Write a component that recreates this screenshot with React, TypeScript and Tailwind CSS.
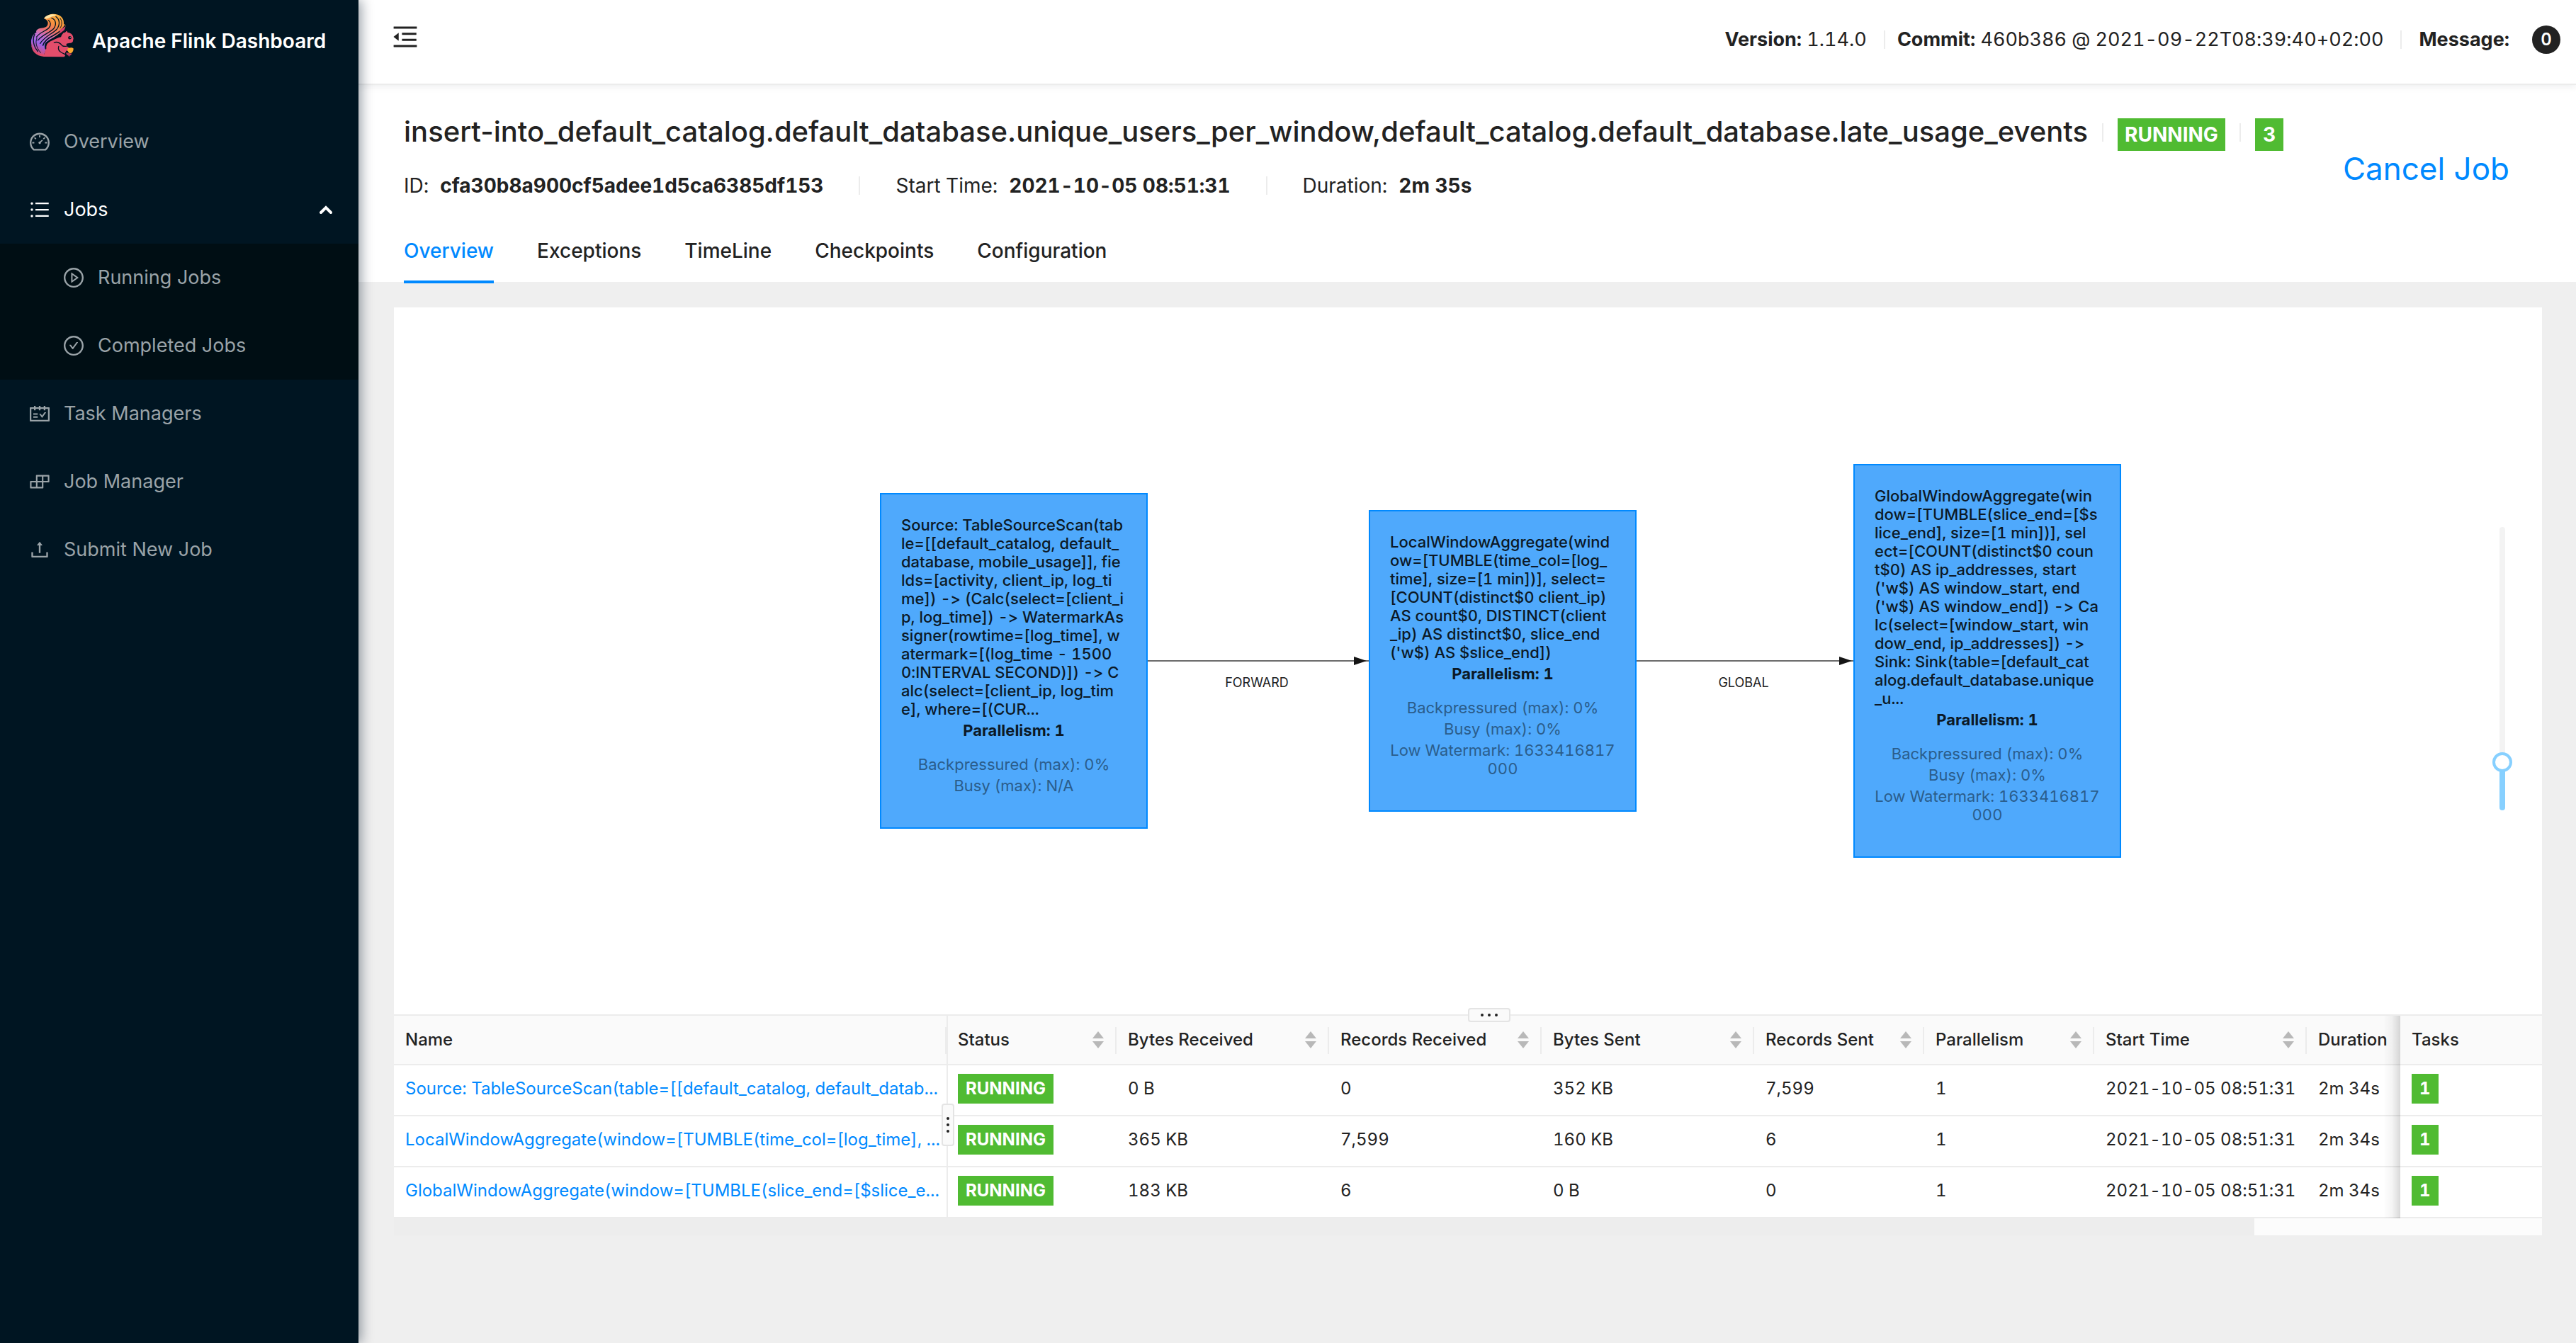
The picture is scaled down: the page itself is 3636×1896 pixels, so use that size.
import type { ReactNode } from "react";
import type { IconType } from "react-icons";
import {
  AiOutlineBars,
  AiOutlineBuild,
  AiOutlineCheckCircle,
  AiOutlineDashboard,
  AiOutlineMenuFold,
  AiOutlinePlayCircle,
  AiOutlineSchedule,
  AiOutlineUpload,
} from "react-icons/ai";

function Squirrel() {
  return (
    <svg viewBox="38 26 190 190" className="h-[62px] w-[62px] shrink-0" aria-hidden="true">
      <defs>
        <linearGradient id="tail" x1="150" y1="28" x2="70" y2="205" gradientUnits="userSpaceOnUse">
          <stop offset="0" stopColor="#fbb03f" />
          <stop offset="0.22" stopColor="#f7903f" />
          <stop offset="0.4" stopColor="#f0716b" />
          <stop offset="0.58" stopColor="#c46fd0" />
          <stop offset="0.75" stopColor="#9a63ea" />
          <stop offset="1" stopColor="#e0496a" />
        </linearGradient>
      </defs>
      <path
        d="M96 48C108 30 134 24 156 31C174 37 184 52 182 72L190 76C188 92 180 102 164 112C146 128 122 138 104 152C98 160 98 172 104 184L96 206C70 206 48 190 42 160C38 140 46 116 64 108C60 102 66 96 74 92C86 88 104 90 110 80C116 70 116 54 96 48Z"
        fill="url(#tail)"
      />
      <path d="M97 46C108 32 130 26 150 32C140 38 130 38 122 44C112 50 104 50 97 46Z" fill="#fde6a8" />
      <path
        d="M41 158C48 190 70 204 98 202L104 178C104 160 116 150 130 144C146 136 158 130 170 128L176 112L188 108L192 104C194 100 198 102 198 108C212 110 222 118 223 130C224 134 225 137 222 140C224 148 218 154 208 154L196 156C190 160 194 168 202 172L214 182C208 190 200 190 194 186L188 196C186 206 192 206 184 214L96 213C62 210 42 190 41 158Z"
        fill="#e34d6b"
      />
      <g fill="none" stroke="#001522" strokeLinecap="round">
        <path d="M116 56C126 62 128 76 118 88C106 102 80 106 64 128" strokeWidth="4" />
        <path d="M130 46C148 52 152 74 138 92C124 108 92 116 70 142" strokeWidth="4" />
        <path d="M148 40C166 52 166 76 152 94C134 114 100 124 80 156" strokeWidth="4" />
        <path d="M166 46C176 58 176 76 166 90" strokeWidth="3" />
        <path d="M188 78C178 96 158 110 136 122C116 132 98 144 92 164" strokeWidth="5" />
        <path d="M176 112C164 124 140 132 122 142C108 150 102 162 104 178" strokeWidth="5" />
        <path d="M56 116C46 138 50 168 70 190" strokeWidth="4" />
        <path d="M66 132C58 150 62 172 82 196" strokeWidth="3" />
        <path d="M140 152C156 146 168 156 176 166C184 170 190 168 194 168" strokeWidth="4" />
        <path d="M160 168C156 180 162 190 174 196C180 200 186 200 188 204" strokeWidth="4" />
      </g>
      <path d="M164 98L190 82L184 98L166 112Z" fill="#d8406f" />
      <circle cx="208" cy="131" r="7" fill="#0b1020" />
      <circle cx="210" cy="129" r="2" fill="#ffffff" />
      <path d="M198 180C200 174 218 170 224 178C224 192 216 200 208 198C202 196 198 188 198 180Z" fill="#fba92f" />
      <path d="M192 196C200 194 208 202 216 198L214 206L208 208L206 214L202 208C196 206 192 202 192 196Z" fill="#b93a5c" />
    </svg>
  );
}

function NavItem({ icon: Icon, label, sub }: { icon: IconType; label: string; sub?: boolean }) {
  return (
    <a
      href="#"
      className={`flex h-24 items-center gap-[18px] text-[#9aa3a8] ${sub ? "pl-[88px]" : "pl-[40px]"}`}
    >
      <Icon className="h-8 w-8" />
      {label}
    </a>
  );
}

function Sidebar() {
  return (
    <aside className="relative z-20 w-[506px] shrink-0 bg-[#001522] text-[27px] shadow-[4px_0_16px_rgba(0,21,41,0.4)]">
      <div className="flex h-[152px] items-start gap-[25px] pt-[19px] pl-[43px]">
        <Squirrel />
        <h1 className="text-[28px] leading-[78px] font-semibold whitespace-nowrap text-white">
          Apache Flink Dashboard
        </h1>
      </div>
      <nav>
        <NavItem icon={AiOutlineDashboard} label="Overview" />
        <button type="button" className="flex h-24 w-full items-center gap-[18px] pr-9 pl-[40px] text-white">
          <AiOutlineBars className="h-8 w-8" />
          Jobs
          <svg viewBox="0 0 20 14" className="ml-auto h-[14px] w-5" aria-hidden="true">
            <path d="M3 11L10 4L17 11" fill="none" stroke="currentColor" strokeWidth="4" strokeLinecap="round" />
          </svg>
        </button>
        <div className="bg-[#000e14]">
          <NavItem icon={AiOutlinePlayCircle} label="Running Jobs" sub />
          <NavItem icon={AiOutlineCheckCircle} label="Completed Jobs" sub />
        </div>
        <NavItem icon={AiOutlineSchedule} label="Task Managers" />
        <NavItem icon={AiOutlineBuild} label="Job Manager" />
        <NavItem icon={AiOutlineUpload} label="Submit New Job" />
      </nav>
    </aside>
  );
}

function Divider() {
  return <span className="h-[26px] w-[2px] shrink-0 bg-[#ececec]" />;
}

function TopBar() {
  return (
    <header className="relative z-10 flex h-[120px] items-center border-b-2 border-[#ececec] bg-white pr-[22px] pb-[6px] pl-[45px] text-[27px] shadow-[0_2px_10px_rgba(0,21,41,0.08)]">
      <button type="button" aria-label="Collapse menu" className="-mt-2">
        <AiOutlineMenuFold className="h-[42px] w-[42px]" />
      </button>
      <div className="ml-auto flex items-center whitespace-nowrap tabular-nums">
        <span>
          <strong className="font-bold">Version:</strong> 1.14.0
        </span>
        <span className="flex pr-[17px] pl-6">
          <Divider />
        </span>
        <span>
          <strong className="font-bold">Commit:</strong> 460b386 @ 2021-09-22T08:39:40+02:00
        </span>
        <span className="flex px-6">
          <Divider />
        </span>
        <strong className="font-bold">Message:</strong>
        <span className="ml-8 flex h-10 w-10 items-center justify-center rounded-full bg-[#222222] text-[24px] font-semibold text-white">
          0
        </span>
      </div>
    </header>
  );
}

const tabs = ["Overview", "Exceptions", "TimeLine", "Checkpoints", "Configuration"];

function JobHeader() {
  return (
    <section className="bg-white pt-[38px] pl-[64px]">
      <div className="flex items-end justify-between pr-[94px]">
        <div>
          <div className="flex items-baseline gap-5">
            <h2 className="text-[40px] leading-[56px] font-medium whitespace-nowrap">
              insert-into_default_catalog.default_database.unique_users_per_window,default_catalog.default_database.late_usage_events
            </h2>
            <Divider />
            <span className="bg-[#50bb32] px-[10px] text-[28px] leading-[46px] font-bold text-white">RUNNING</span>
            <Divider />
            <span className="bg-[#50bb32] px-[11px] text-[28px] leading-[46px] font-bold text-white">3</span>
          </div>
          <dl className="mt-[34px] flex items-center gap-[50px] text-[28px] leading-[28px] tabular-nums">
            <div className="flex gap-4">
              <dt>ID:</dt>
              <dd className="font-bold">cfa30b8a900cf5adee1d5ca6385df153</dd>
            </div>
            <Divider />
            <div className="flex gap-4">
              <dt>Start Time:</dt>
              <dd className="font-bold">2021-10-05 08:51:31</dd>
            </div>
            <Divider />
            <div className="flex gap-4">
              <dt>Duration:</dt>
              <dd className="font-bold">2m 35s</dd>
            </div>
          </dl>
        </div>
        <a href="#" className="text-[44px] leading-[76px] text-[#0089ff]">
          Cancel Job
        </a>
      </div>
      <div role="tablist" className="mt-[34px] flex h-[88px] gap-[61px] text-[28px] font-medium">
        {tabs.map((tab, i) => (
          <button
            key={tab}
            type="button"
            role="tab"
            aria-selected={i === 0}
            className={`relative ${i === 0 ? "text-[#0089ff]" : ""}`}
          >
            {tab}
            {i === 0 && <span className="absolute inset-x-0 -bottom-[2px] h-1 bg-[#0089ff]" />}
          </button>
        ))}
      </div>
    </section>
  );
}

type GraphNode = { place: string; lines: string[]; metrics: string[] };

const nodes: GraphNode[] = [
  {
    place: "left-[686px] top-[262px]",
    lines: [
      "Source: TableSourceScan(tab",
      "le=[[default_catalog, default_",
      "database, mobile_usage]], fie",
      "lds=[activity, client_ip, log_ti",
      "me]) -> (Calc(select=[client_i",
      "p, log_time]) -> WatermarkAs",
      "signer(rowtime=[log_time], w",
      "atermark=[(log_time - 1500",
      "0:INTERVAL SECOND)]) -> C",
      "alc(select=[client_ip, log_tim",
      "e], where=[(CUR...",
    ],
    metrics: ["Backpressured (max): 0%", "Busy (max): N/A"],
  },
  {
    place: "left-[1376px] top-[286px]",
    lines: [
      "LocalWindowAggregate(wind",
      "ow=[TUMBLE(time_col=[log_",
      "time], size=[1 min])], select=",
      "[COUNT(distinct$0 client_ip)",
      "AS count$0, DISTINCT(client",
      "_ip) AS distinct$0, slice_end",
      "('w$) AS $slice_end])",
    ],
    metrics: ["Backpressured (max): 0%", "Busy (max): 0%", "Low Watermark: 1633416817\n000"],
  },
  {
    place: "left-[2060px] top-[221px]",
    lines: [
      "GlobalWindowAggregate(win",
      "dow=[TUMBLE(slice_end=[$s",
      "lice_end], size=[1 min])], sel",
      "ect=[COUNT(distinct$0 coun",
      "t$0) AS ip_addresses, start",
      "('w$) AS window_start, end",
      "('w$) AS window_end]) -> Ca",
      "lc(select=[window_start, win",
      "dow_end, ip_addresses]) ->",
      "Sink: Sink(table=[default_cat",
      "alog.default_database.unique",
      "_u...",
    ],
    metrics: ["Backpressured (max): 0%", "Busy (max): 0%", "Low Watermark: 1633416817\n000"],
  },
];

function Graph() {
  return (
    <div className="relative h-[998px]">
      <svg className="absolute inset-0 h-full w-full" aria-hidden="true">
        <g stroke="#6b6b6b" strokeWidth="2">
          <path d="M1064 499H1376" />
          <path d="M1754 499H2060" />
        </g>
        <g fill="#151515">
          <path d="M1355 493L1373 499L1355 505Z" />
          <path d="M2040 493L2058 499L2040 505Z" />
        </g>
        <g fill="#222222" fontSize="18" textAnchor="middle">
          <text x="1218" y="536">FORWARD</text>
          <text x="1905" y="536">GLOBAL</text>
        </g>
      </svg>
      {nodes.map((node) => (
        <div
          key={node.place}
          className={`absolute w-[378px] border-2 border-[#0089ff] bg-[#4fa9fc] pt-[30px] pb-[46px] text-[22px] leading-[26px] tabular-nums ${node.place}`}
        >
          <p className="pl-[28px] font-medium whitespace-pre text-[#0c1926]">{node.lines.join("\n")}</p>
          <p className="mt-1 text-center font-bold text-[#0c1926]">Parallelism: 1</p>
          <div className="mt-[22px] flex flex-col gap-1 text-center whitespace-pre text-[#2b5d8b]">
            {node.metrics.map((m) => (
              <p key={m}>{m}</p>
            ))}
          </div>
        </div>
      ))}
      <input
        type="range"
        aria-label="Zoom"
        min="0"
        max="1000"
        defaultValue="145"
        className="absolute top-[310px] right-[42px] h-[400px] w-7 appearance-none bg-transparent [direction:rtl] [writing-mode:vertical-lr] [&::-webkit-slider-runnable-track]:w-2 [&::-webkit-slider-runnable-track]:rounded-full [&::-webkit-slider-runnable-track]:bg-[linear-gradient(to_top,#87d0ff_17%,#f3f3f3_17%)] [&::-webkit-slider-thumb]:-ml-[10px] [&::-webkit-slider-thumb]:h-7 [&::-webkit-slider-thumb]:w-7 [&::-webkit-slider-thumb]:appearance-none [&::-webkit-slider-thumb]:rounded-full [&::-webkit-slider-thumb]:border-4 [&::-webkit-slider-thumb]:border-[#87d0ff] [&::-webkit-slider-thumb]:bg-white"
      />
    </div>
  );
}

function SortArrows() {
  return (
    <svg viewBox="0 0 16 24" className="h-6 w-4 fill-[#b8b8b8]" aria-hidden="true">
      <path d="M8 0L16 10H0Z" />
      <path d="M8 24L16 14H0Z" />
    </svg>
  );
}

const sortable = ["Status", "Bytes Received", "Records Received", "Bytes Sent", "Records Sent", "Parallelism", "Start Time"];

const rows = [
  ["Source: TableSourceScan(table=[[default_catalog, default_datab...", "0 B", "0", "352 KB", "7,599"],
  ["LocalWindowAggregate(window=[TUMBLE(time_col=[log_time], ...", "365 KB", "7,599", "160 KB", "6"],
  ["GlobalWindowAggregate(window=[TUMBLE(slice_end=[$slice_e...", "183 KB", "6", "0 B", "0"],
];

function Tag({ children }: { children: ReactNode }) {
  return (
    <span className="inline-block bg-[#50bb32] px-[11px] align-middle leading-[42px] font-bold text-white">
      {children}
    </span>
  );
}

function ColumnShadow() {
  return (
    <span className="absolute top-0 right-full -bottom-[2px] w-6 bg-linear-to-l from-black/15 via-black/4 to-transparent" />
  );
}

function Subtasks() {
  const cell = "h-[72px] border-b-2 border-[#ececec] px-4 pb-1";
  return (
    <div className="relative">
      <table className="w-full table-fixed border-separate border-spacing-0 border-t-2 border-[#ececec] text-[24px] whitespace-nowrap tabular-nums">
        <colgroup>
          <col />
          <col className="w-[240px]" />
          <col className="w-[300px]" />
          <col className="w-[300px]" />
          <col className="w-[300px]" />
          <col className="w-[240px]" />
          <col className="w-[240px]" />
          <col className="w-[300px]" />
          <col className="w-[132px]" />
          <col className="w-[200px]" />
        </colgroup>
        <thead>
          <tr className="bg-[#fafafa] text-left [&>th]:h-[70px] [&>th]:border-b-2 [&>th]:border-[#ececec] [&>th]:font-medium">
            <th className="relative px-4">
              Name
              <span className="absolute top-4 right-0 h-[38px] w-[2px] bg-[#ececec]" />
            </th>
            {sortable.map((name, i) => (
              <th key={name} className={`relative pr-[18px] ${i === 0 ? "border-l-2 pl-[14px]" : "pl-4"}`}>
                <button type="button" className="flex w-full items-center justify-between">
                  {name}
                  <SortArrows />
                </button>
                <span className="absolute top-4 right-0 h-[38px] w-[2px] bg-[#ececec]" />
              </th>
            ))}
            <th className="pl-4">Duration</th>
            <th className="relative bg-[#fafafa] pl-4">
              Tasks
              <ColumnShadow />
            </th>
          </tr>
        </thead>
        <tbody>
          {rows.map(([name, ...counts]) => (
            <tr key={name} className="bg-white">
              <td className={cell}>
                <a href="#" className="text-[#0089ff]">
                  {name}
                </a>
              </td>
              <td className="h-[72px] border-b-2 border-l-2 border-[#ececec] pb-1 pl-[14px]">
                <Tag>RUNNING</Tag>
              </td>
              {counts.map((value, i) => (
                <td key={i} className={cell}>
                  {value}
                </td>
              ))}
              <td className={cell}>1</td>
              <td className={cell}>2021-10-05 08:51:31</td>
              <td className={cell}>2m 34s</td>
              <td className={`relative bg-white ${cell}`}>
                <Tag>1</Tag>
                <ColumnShadow />
              </td>
            </tr>
          ))}
        </tbody>
      </table>
      <div className="flex h-6 justify-end bg-[#ededed]">
        <span className="w-[406px] bg-[#fcfcfc]" />
      </div>
      <button
        type="button"
        aria-label="Resize table height"
        className="absolute -top-[9px] left-1/2 flex h-5 w-[60px] items-center justify-center gap-[6px] rounded-[4px] border-2 border-[#e4e4e4] bg-[#fafafa]"
      >
        <span className="h-1 w-1 rounded-full bg-[#222222]" />
        <span className="h-1 w-1 rounded-full bg-[#222222]" />
        <span className="h-1 w-1 rounded-full bg-[#222222]" />
      </button>
      <button
        type="button"
        aria-label="Resize name column"
        className="absolute top-[126px] right-[2241px] flex h-[60px] w-[18px] flex-col items-center justify-center gap-[5px] rounded-[4px] border-2 border-[#e4e4e4] bg-[#fafafa]"
      >
        <span className="h-1 w-1 rounded-full bg-[#222222]" />
        <span className="h-1 w-1 rounded-full bg-[#222222]" />
        <span className="h-1 w-1 rounded-full bg-[#222222]" />
      </button>
    </div>
  );
}

export default function App() {
  return (
    <div className="flex min-h-screen bg-[#efefef] font-['Inter',sans-serif] text-[#222222] [font-feature-settings:'calt'_0]">
      <Sidebar />
      <div className="min-w-0 flex-1">
        <TopBar />
        <JobHeader />
        <main className="mt-9 mr-12 ml-[50px] bg-white">
          <Graph />
          <Subtasks />
        </main>
      </div>
    </div>
  );
}
